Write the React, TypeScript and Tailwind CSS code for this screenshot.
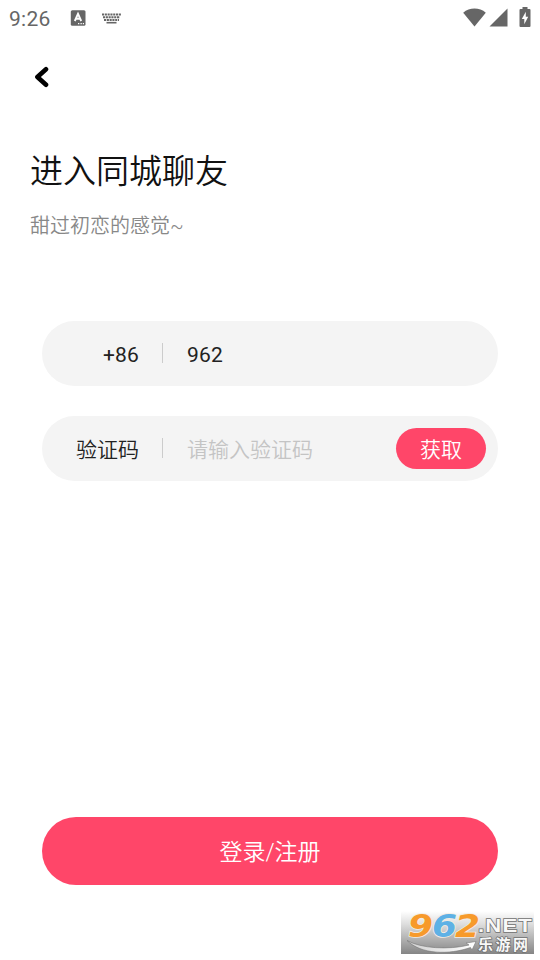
import { useState } from 'react';

function StatusBar() {
  return (
    <div className="flex h-9 items-center pl-[9px] pr-[9px] text-[#666666]">
      <span className="w-[61px] pt-[2px] text-[21px] leading-none tracking-[0.3px]">9:26</span>

      {/* Input method */}
      <svg className="h-4 w-4" viewBox="0 0 16 16">
        <rect x="0.8" y="0.2" width="14.7" height="15.6" rx="1.5" fill="currentColor" />
        <path d="M4.8 11L8 3.8L11.2 11M5.9 8.8h4.2" fill="none" stroke="#fff" strokeWidth="1.9" />
        <path d="M8 13.6h1.3M10.5 13.6h1.3M12.8 13.6h1.2" stroke="#fff" strokeWidth="1.2" />
      </svg>

      {/* Keyboard */}
      <svg className="ml-4 h-[11px] w-[19px]" viewBox="0 0 19 11">
        <g fill="none" stroke="currentColor" strokeWidth="2">
          <path d="M0 1.5h19" strokeDasharray="2.1 0.7" />
          <path d="M1 4.3h17" strokeDasharray="2.1 0.7" />
          <path d="M2 7h15" strokeDasharray="2.1 0.7" />
          <path d="M4.5 9.7h10" strokeWidth="1.6" />
        </g>
      </svg>

      <div className="-mt-[2px] ml-auto flex items-center">
        <svg className="h-[19px] w-[23px]" viewBox="0 0 23 19">
          <path d="M11.5 18.5L0.2 4.7C6.5-0.8 16.5-0.8 22.8 4.7Z" fill="currentColor" />
        </svg>
        <svg className="ml-[3px] h-[19px] w-[19px]" viewBox="0 0 19 19">
          <path d="M18.5 0.5V18.5H0.5Z" fill="currentColor" />
        </svg>
        <svg className="ml-[11px] h-5 w-3" viewBox="0 0 12 20">
          <path d="M3.5 0h5v2H10.5a1 1 0 0 1 1 1V19a1 1 0 0 1-1 1H1.5a1 1 0 0 1-1-1V3a1 1 0 0 1 1-1h2z" fill="currentColor" />
          <path d="M6.8 4.8L2.8 12h2.5v5.3L9.2 9.8H6.8z" fill="#fff" />
        </svg>
      </div>
    </div>
  );
}

function SiteMark() {
  return (
    <svg className="absolute left-[401px] top-[911px] h-[43px] w-[133px] overflow-visible" viewBox="0 0 133 43">
      <defs>
        <linearGradient id="markBg" x1="0" y1="0" x2="0" y2="1">
          <stop offset="0" stopColor="#ffffff" />
          <stop offset="0.3" stopColor="#dedede" />
          <stop offset="1" stopColor="#858585" />
        </linearGradient>
        <linearGradient id="swoosh" x1="0" y1="0" x2="1" y2="0">
          <stop offset="0" stopColor="#d0d0d0" />
          <stop offset="1" stopColor="#ffffff" />
        </linearGradient>
      </defs>
      <rect width="133" height="43" fill="url(#markBg)" />
      <path d="M6 29.5C20 37.5 48 39 68 34L65 32L75 30.5L71 39L69.5 36.5C48 44 20 43.5 6 29.5Z" fill="url(#swoosh)" stroke="#777" strokeWidth="0.6" />
      <g fontFamily="DejaVu Sans, sans-serif" fontWeight="700" fontStyle="italic" fontSize="32" stroke="#f4ece2" strokeWidth="1.6" paintOrder="stroke">
        <text x="7" y="26" textLength="25" lengthAdjust="spacingAndGlyphs" fill="#f79a2b">9</text>
        <text x="31" y="26" textLength="25" lengthAdjust="spacingAndGlyphs" fill="#5eb1e5">6</text>
        <text x="54" y="26" textLength="25" lengthAdjust="spacingAndGlyphs" fill="#f79a2b">2</text>
      </g>
      <g fill="#f8f8f8" stroke="#6f6f6f" strokeWidth="1.4" paintOrder="stroke" fontWeight="700">
        <text x="77" y="21" fontFamily="Liberation Sans, sans-serif" fontSize="19" letterSpacing="1" textLength="55" lengthAdjust="spacingAndGlyphs">.NET</text>
        <text x="77" y="38.5" fontFamily="Noto Sans CJK SC, sans-serif" fontSize="15" textLength="50">乐游网</text>
      </g>
    </svg>
  );
}

export default function App() {
  const [phone, setPhone] = useState('962');
  const [code, setCode] = useState('');

  return (
    <main className="relative flex h-[960px] w-[540px] flex-col overflow-hidden bg-white font-['Roboto','Noto_Sans_CJK_SC',sans-serif]">
      <StatusBar />

      <button className="ml-[34px] mt-[30px] h-[22px] w-4" aria-label="返回">
        <svg className="h-[22px] w-4" viewBox="0 0 16 22">
          <path d="M12 3.2L3.4 11L12 18.8" fill="none" stroke="#000" strokeWidth="4.6" strokeLinecap="round" strokeLinejoin="round" />
        </svg>
      </button>

      <h1 className="ml-[30px] mt-[60px] h-12 text-[33px] font-[350] leading-[48px] text-[#111111]">进入同城聊友</h1>
      <p className="ml-[30px] mt-[14px] h-8 text-[20px] font-[350] leading-8 text-[#888888]">甜过初恋的感觉~</p>

      <form className="mx-[42px] mt-[79px] flex flex-1 flex-col font-[350]" onSubmit={(e) => e.preventDefault()}>
        <div className="flex h-[65px] items-center rounded-full bg-[#f4f4f4] text-[21px] font-normal text-[#222222]">
          <span className="w-[97px] pt-[4px] text-right tracking-[0.2px]">+86</span>
          <i className="-mt-px ml-[23px] h-5 w-px bg-[#cccccc]" />
          <input
            className="ml-6 w-[200px] bg-transparent pt-[4px] tracking-[0.2px] outline-none"
            value={phone}
            onChange={(e) => setPhone(e.target.value)}
          />
        </div>

        <div className="mt-[30px] flex h-[65px] items-center rounded-full bg-[#f4f4f4] pr-3 text-[21px] text-[#222222]">
          <span className="w-[97px] pt-[4px] text-right">验证码</span>
          <i className="-mt-px ml-[23px] h-5 w-px bg-[#cccccc]" />
          <input
            className="ml-6 w-[180px] bg-transparent pt-[4px] outline-none placeholder:text-[#c4c4c4]"
            placeholder="请输入验证码"
            value={code}
            onChange={(e) => setCode(e.target.value)}
          />
          <button type="button" className="ml-auto h-[41px] w-[90px] rounded-full bg-[#ff4669] pt-[4px] text-white">
            获取
          </button>
        </div>

        <button className="mb-[75px] mt-auto h-[68px] rounded-full bg-[#ff4669] pt-[4px] text-[23px] text-white">
          登录/注册
        </button>
      </form>

      <SiteMark />
    </main>
  );
}
